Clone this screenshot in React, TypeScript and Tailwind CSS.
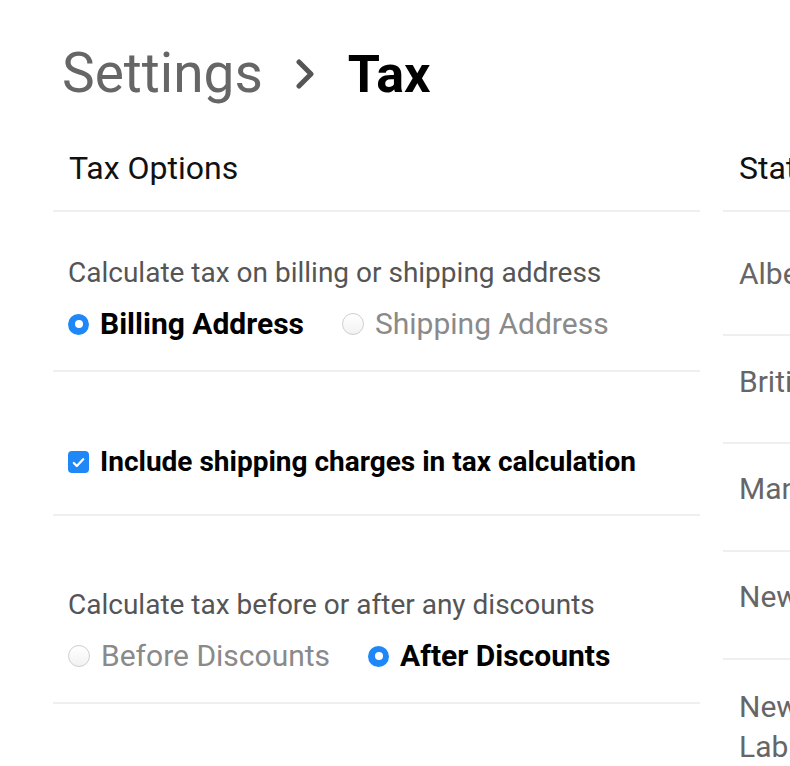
import React from 'react';

const font = { fontFamily: 'Roboto, "Noto Sans", Arial, sans-serif' };

function Radio({ checked }: { checked: boolean }) {
  if (checked) {
    return (
      <span className="flex h-[21px] w-[21px] shrink-0 items-center justify-center rounded-full bg-[#2088f6]">
        <span className="h-[8px] w-[8px] rounded-full bg-white" />
      </span>
    );
  }
  return (
    <span className="h-[22px] w-[22px] shrink-0 rounded-full border border-[#cfcfcf] bg-gradient-to-b from-white to-[#f2f2f2]" />
  );
}

function RadioOption({ label, checked }: { label: string; checked: boolean }) {
  return (
    <label className="flex items-center gap-[11px]">
      <Radio checked={checked} />
      <span className={checked ? 'font-bold text-black' : 'text-[#8a8a8a]'}>{label}</span>
    </label>
  );
}

const provinces = [
  { name: 'Alberta', cls: 'h-[124px] pt-[42px]' },
  { name: 'British Columbia', cls: 'h-[108px] pt-[26px]' },
  { name: 'Manitoba', cls: 'h-[108px] pt-[25px]' },
  { name: 'New Brunswick', cls: 'h-[108px] pt-[25px]' },
  { name: 'Newfoundland and Labrador', cls: 'h-[108px] pt-[27px]' },
];

export default function App() {
  return (
    <div className="h-[766px] w-[790px] overflow-hidden bg-white" style={font}>
      {/* breadcrumb title */}
      <div className="flex items-baseline pl-[62px] pt-[46px] leading-none">
        <span className="text-[55px] text-[#666666]">Settings</span>
        <svg className="ml-[33px] mr-[33px] h-[30px] w-[19px] self-center" viewBox="0 0 19 30" fill="none">
          <path d="M3 3l12 12L3 27" stroke="#555555" strokeWidth="5" strokeLinecap="round" strokeLinejoin="round" />
        </svg>
        <span className="text-[52px] font-bold text-black">Tax</span>
      </div>

      <div className="mt-[51px] flex gap-[23px] pl-[53px]">
        {/* tax options */}
        <div className="w-[647px] shrink-0">
          <div className="border-b-2 border-[#efefef] pb-[26px] pl-[16px] text-[32px] leading-none text-[#111111]">
            Tax Options
          </div>

          <div className="border-b-2 border-[#efefef] pb-[31px] pl-[15px] pt-[47px]">
            <div className="text-[28px] leading-none text-[#555555]">Calculate tax on billing or shipping address</div>
            <div className="mt-[22px] flex items-center gap-[38px] text-[30px] leading-none">
              <RadioOption label="Billing Address" checked />
              <RadioOption label="Shipping Address" checked={false} />
            </div>
          </div>

          <div className="border-b-2 border-[#efefef] pb-[38px] pl-[15px] pt-[76px]">
            <label className="flex items-center gap-[11px] text-[28px] leading-none">
              <span className="flex h-[22px] w-[21px] shrink-0 items-center justify-center rounded-[4px] bg-[#2088f6]">
                <svg viewBox="0 0 16 16" className="h-[15px] w-[15px]" fill="none">
                  <path d="M3 8.5l3.2 3.2L13 4.5" stroke="white" strokeWidth="2.4" strokeLinecap="round" strokeLinejoin="round" />
                </svg>
              </span>
              <span className="font-bold text-black">Include shipping charges in tax calculation</span>
            </label>
          </div>

          <div className="border-b-2 border-[#efefef] pb-[31px] pl-[15px] pt-[75px]">
            <div className="text-[28px] leading-none text-[#555555]">Calculate tax before or after any discounts</div>
            <div className="mt-[22px] flex items-center gap-[38px] text-[30px] leading-none">
              <RadioOption label="Before Discounts" checked={false} />
              <RadioOption label="After Discounts" checked />
            </div>
          </div>
        </div>

        {/* provinces */}
        <div className="w-[420px] shrink-0">
          <div className="border-b-2 border-[#efefef] pb-[26px] pl-[16px] text-[32px] leading-none text-[#111111]">
            State / Province
          </div>
          {provinces.map((p) => (
            <div key={p.name} className={`border-b-2 border-[#efefef] pl-[16px] text-[30px] leading-[40px] text-[#666666] ${p.cls}`}>
              <div className="w-[262px]">{p.name}</div>
            </div>
          ))}
        </div>
      </div>
    </div>
  );
}
